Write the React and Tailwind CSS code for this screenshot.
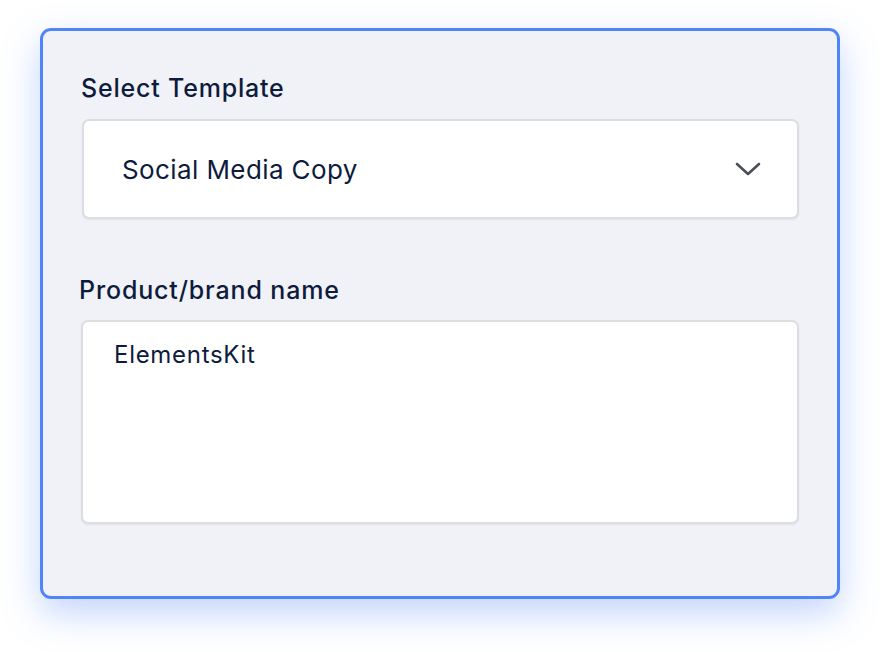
export default function App() {
  return (
    <div className="w-[880px] h-[652px] bg-white pt-[28px] pl-[40px]" style={{ fontFamily: "Inter, 'Noto Sans', sans-serif" }}>
      <div className="w-[800px] h-[571px] rounded-[11px] border-[3px] border-[#4f85f6] bg-[#f0f2f7] shadow-[0_14px_36px_rgba(79,133,246,0.35)] pt-[41px] px-[38px]">
        <div className="text-[25px] leading-[32px] font-medium tracking-[0.8px] text-[#0e1b3d]">Select Template</div>
        <div className="mt-[15px] ml-[1px] h-[100px] rounded-[7px] border-2 border-[#dcdde1] bg-white flex items-center justify-between pl-[38px] pr-[36px] shadow-[0_1px_2px_rgba(0,0,0,0.06)]">
          <span className="text-[26px] tracking-[0.4px] text-[#0e1b3d]">Social Media Copy</span>
          <svg width="26" height="16" viewBox="0 0 26 16" fill="none">
            <path d="M2 3 L13 13 L24 3" stroke="#4a4e57" strokeWidth="2.6" strokeLinecap="round" strokeLinejoin="round" />
          </svg>
        </div>
        <div className="mt-[55px] ml-[-2px] text-[25px] leading-[32px] font-medium tracking-[0.85px] text-[#0e1b3d]">Product/brand name</div>
        <div className="mt-[14px] h-[204px] rounded-[7px] border-2 border-[#dcdde1] bg-white pl-[31px] pt-[17px] shadow-[0_1px_2px_rgba(0,0,0,0.06)]">
          <span className="text-[24px] leading-[32px] tracking-[0.7px] text-[#0e1b3d]">ElementsKit</span>
        </div>
      </div>
    </div>
  );
}
